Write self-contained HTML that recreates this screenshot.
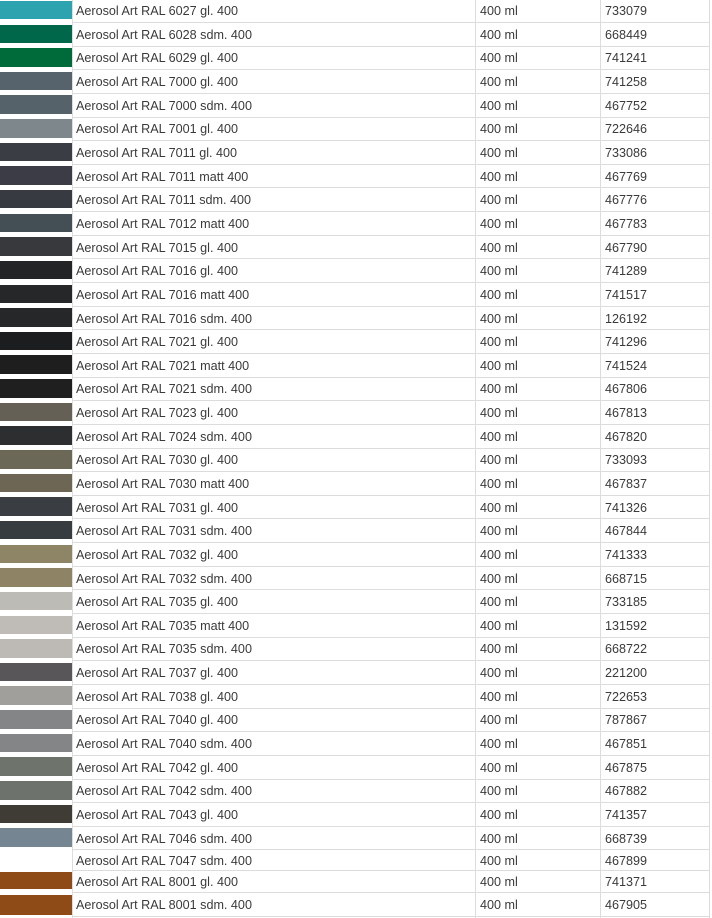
<!DOCTYPE html>
<html><head><meta charset="utf-8"><style>
body{margin:0;width:712px;height:918px;overflow:hidden;background:#fff;font-family:"Liberation Sans",sans-serif;font-size:12.6px;color:#3a3a3a;position:relative}
#t{position:absolute;left:0;top:-0.65px;width:712px}
.r{position:relative;height:23.65px}
.r::after{content:"";position:absolute;left:72px;width:638px;bottom:0;height:1px;background:#dcdcdc}
.s{position:absolute;left:0;top:1.5px;width:72px;height:18.5px}
.n,.v,.c{position:absolute;top:50%;transform:translateY(-50%);white-space:nowrap}
.n{left:76px}.v{left:480px}.c{left:605px}
.l{position:absolute;top:0;bottom:0;width:1px;background:#dcdcdc}
</style></head><body>
<div class="l" style="left:72px;top:0;height:918px"></div>
<div class="l" style="left:475px;top:0;height:918px"></div>
<div class="l" style="left:600px;top:0;height:918px"></div>
<div class="l" style="left:709px;top:0;height:918px"></div>
<div id="t">
<div class="r"><div class="s" style="background:#2ea3b0"></div><span class="n">Aerosol Art RAL 6027 gl. 400</span><span class="v">400 ml</span><span class="c">733079</span></div>
<div class="r"><div class="s" style="background:#00674a"></div><span class="n">Aerosol Art RAL 6028 sdm. 400</span><span class="v">400 ml</span><span class="c">668449</span></div>
<div class="r"><div class="s" style="background:#006b3a"></div><span class="n">Aerosol Art RAL 6029 gl. 400</span><span class="v">400 ml</span><span class="c">741241</span></div>
<div class="r"><div class="s" style="background:#56636c"></div><span class="n">Aerosol Art RAL 7000 gl. 400</span><span class="v">400 ml</span><span class="c">741258</span></div>
<div class="r"><div class="s" style="background:#56626a"></div><span class="n">Aerosol Art RAL 7000 sdm. 400</span><span class="v">400 ml</span><span class="c">467752</span></div>
<div class="r"><div class="s" style="background:#7d878c"></div><span class="n">Aerosol Art RAL 7001 gl. 400</span><span class="v">400 ml</span><span class="c">722646</span></div>
<div class="r"><div class="s" style="background:#3a3d44"></div><span class="n">Aerosol Art RAL 7011 gl. 400</span><span class="v">400 ml</span><span class="c">733086</span></div>
<div class="r"><div class="s" style="background:#3b3c45"></div><span class="n">Aerosol Art RAL 7011 matt 400</span><span class="v">400 ml</span><span class="c">467769</span></div>
<div class="r"><div class="s" style="background:#383a42"></div><span class="n">Aerosol Art RAL 7011 sdm. 400</span><span class="v">400 ml</span><span class="c">467776</span></div>
<div class="r"><div class="s" style="background:#444f55"></div><span class="n">Aerosol Art RAL 7012 matt 400</span><span class="v">400 ml</span><span class="c">467783</span></div>
<div class="r"><div class="s" style="background:#38393d"></div><span class="n">Aerosol Art RAL 7015 gl. 400</span><span class="v">400 ml</span><span class="c">467790</span></div>
<div class="r"><div class="s" style="background:#232426"></div><span class="n">Aerosol Art RAL 7016 gl. 400</span><span class="v">400 ml</span><span class="c">741289</span></div>
<div class="r"><div class="s" style="background:#262729"></div><span class="n">Aerosol Art RAL 7016 matt 400</span><span class="v">400 ml</span><span class="c">741517</span></div>
<div class="r"><div class="s" style="background:#262729"></div><span class="n">Aerosol Art RAL 7016 sdm. 400</span><span class="v">400 ml</span><span class="c">126192</span></div>
<div class="r"><div class="s" style="background:#1c1d1e"></div><span class="n">Aerosol Art RAL 7021 gl. 400</span><span class="v">400 ml</span><span class="c">741296</span></div>
<div class="r"><div class="s" style="background:#1e1e1f"></div><span class="n">Aerosol Art RAL 7021 matt 400</span><span class="v">400 ml</span><span class="c">741524</span></div>
<div class="r"><div class="s" style="background:#1f1f20"></div><span class="n">Aerosol Art RAL 7021 sdm. 400</span><span class="v">400 ml</span><span class="c">467806</span></div>
<div class="r"><div class="s" style="background:#656055"></div><span class="n">Aerosol Art RAL 7023 gl. 400</span><span class="v">400 ml</span><span class="c">467813</span></div>
<div class="r"><div class="s" style="background:#2d2e30"></div><span class="n">Aerosol Art RAL 7024 sdm. 400</span><span class="v">400 ml</span><span class="c">467820</span></div>
<div class="r"><div class="s" style="background:#6c6858"></div><span class="n">Aerosol Art RAL 7030 gl. 400</span><span class="v">400 ml</span><span class="c">733093</span></div>
<div class="r"><div class="s" style="background:#6d6655"></div><span class="n">Aerosol Art RAL 7030 matt 400</span><span class="v">400 ml</span><span class="c">467837</span></div>
<div class="r"><div class="s" style="background:#3a3e42"></div><span class="n">Aerosol Art RAL 7031 gl. 400</span><span class="v">400 ml</span><span class="c">741326</span></div>
<div class="r"><div class="s" style="background:#363c3f"></div><span class="n">Aerosol Art RAL 7031 sdm. 400</span><span class="v">400 ml</span><span class="c">467844</span></div>
<div class="r"><div class="s" style="background:#8e8566"></div><span class="n">Aerosol Art RAL 7032 gl. 400</span><span class="v">400 ml</span><span class="c">741333</span></div>
<div class="r"><div class="s" style="background:#8e8465"></div><span class="n">Aerosol Art RAL 7032 sdm. 400</span><span class="v">400 ml</span><span class="c">668715</span></div>
<div class="r"><div class="s" style="background:#bdbbb5"></div><span class="n">Aerosol Art RAL 7035 gl. 400</span><span class="v">400 ml</span><span class="c">733185</span></div>
<div class="r"><div class="s" style="background:#bfbcb8"></div><span class="n">Aerosol Art RAL 7035 matt 400</span><span class="v">400 ml</span><span class="c">131592</span></div>
<div class="r"><div class="s" style="background:#bdbab5"></div><span class="n">Aerosol Art RAL 7035 sdm. 400</span><span class="v">400 ml</span><span class="c">668722</span></div>
<div class="r"><div class="s" style="background:#595659"></div><span class="n">Aerosol Art RAL 7037 gl. 400</span><span class="v">400 ml</span><span class="c">221200</span></div>
<div class="r"><div class="s" style="background:#a19f9b"></div><span class="n">Aerosol Art RAL 7038 gl. 400</span><span class="v">400 ml</span><span class="c">722653</span></div>
<div class="r"><div class="s" style="background:#838586"></div><span class="n">Aerosol Art RAL 7040 gl. 400</span><span class="v">400 ml</span><span class="c">787867</span></div>
<div class="r"><div class="s" style="background:#848587"></div><span class="n">Aerosol Art RAL 7040 sdm. 400</span><span class="v">400 ml</span><span class="c">467851</span></div>
<div class="r"><div class="s" style="background:#6e746c"></div><span class="n">Aerosol Art RAL 7042 gl. 400</span><span class="v">400 ml</span><span class="c">467875</span></div>
<div class="r"><div class="s" style="background:#6d726c"></div><span class="n">Aerosol Art RAL 7042 sdm. 400</span><span class="v">400 ml</span><span class="c">467882</span></div>
<div class="r"><div class="s" style="background:#3f3b35"></div><span class="n">Aerosol Art RAL 7043 gl. 400</span><span class="v">400 ml</span><span class="c">741357</span></div>
<div class="r"><div class="s" style="background:#758592"></div><span class="n">Aerosol Art RAL 7046 sdm. 400</span><span class="v">400 ml</span><span class="c">668739</span></div>
<div class="r" style="height:20.5px"><span class="n">Aerosol Art RAL 7047 sdm. 400</span><span class="v">400 ml</span><span class="c">467899</span></div>
<div class="r" style="height:22.5px"><div class="s" style="background:#8e4a17;top:1px;height:17.5px"></div><span class="n">Aerosol Art RAL 8001 gl. 400</span><span class="v">400 ml</span><span class="c">741371</span></div>
<div class="r" style="height:23.5px"><div class="s" style="background:#8e4a17;top:1.5px;height:20px"></div><span class="n">Aerosol Art RAL 8001 sdm. 400</span><span class="v">400 ml</span><span class="c">467905</span></div>
</div>
</body></html>
